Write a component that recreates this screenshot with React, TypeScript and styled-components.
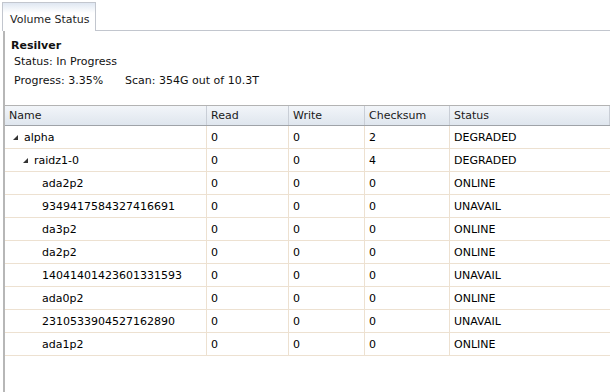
import styled, { createGlobalStyle } from 'styled-components';

// Volume status tab: resilver summary on top, pool tree grid below.

const Global = createGlobalStyle`
  html, body {
    margin: 0;
    padding: 0;
    background: #fff;
  }
  body {
    font-family: 'DejaVu Sans', Verdana, sans-serif;
    font-size: 11px;
    color: #000;
  }
`;

type Node = {
  name: string;
  depth: number;
  branch?: boolean;
  read: number;
  write: number;
  cksum: number;
  status: string;
};

const rows: Node[] = [
  { name: 'alpha', depth: 0, branch: true, read: 0, write: 0, cksum: 2, status: 'DEGRADED' },
  { name: 'raidz1-0', depth: 1, branch: true, read: 0, write: 0, cksum: 4, status: 'DEGRADED' },
  { name: 'ada2p2', depth: 2, read: 0, write: 0, cksum: 0, status: 'ONLINE' },
  { name: '9349417584327416691', depth: 2, read: 0, write: 0, cksum: 0, status: 'UNAVAIL' },
  { name: 'da3p2', depth: 2, read: 0, write: 0, cksum: 0, status: 'ONLINE' },
  { name: 'da2p2', depth: 2, read: 0, write: 0, cksum: 0, status: 'ONLINE' },
  { name: '14041401423601331593', depth: 2, read: 0, write: 0, cksum: 0, status: 'UNAVAIL' },
  { name: 'ada0p2', depth: 2, read: 0, write: 0, cksum: 0, status: 'ONLINE' },
  { name: '2310533904527162890', depth: 2, read: 0, write: 0, cksum: 0, status: 'UNAVAIL' },
  { name: 'ada1p2', depth: 2, read: 0, write: 0, cksum: 0, status: 'ONLINE' },
];

function Expander() {
  return (
    <svg width="5" height="5" viewBox="0 0 5 5">
      <polygon points="5,0 5,5 0,5" fill="#333" />
    </svg>
  );
}

export default function App() {
  return (
    <Page>
      <Global />
      <TabStrip>
        <Tab>Volume Status</Tab>
      </TabStrip>
      <Panel>
        <Summary>
          <Heading>Resilver</Heading>
          <Line $gap={2}>Status: In Progress</Line>
          <Line $gap={5}>
            <span>Progress: 3.35%</span>
            <span>Scan: 354G out of 10.3T</span>
          </Line>
        </Summary>
        <Grid>
          <HeaderRow>
            <HeadCell>Name</HeadCell>
            <HeadCell>Read</HeadCell>
            <HeadCell>Write</HeadCell>
            <HeadCell>Checksum</HeadCell>
            <HeadCell>Status</HeadCell>
          </HeaderRow>
          {rows.map((r) => (
            <Row key={r.name}>
              <NameCell $depth={r.depth} $branch={!!r.branch}>
                {r.branch && <Expander />}
                <span>{r.name}</span>
              </NameCell>
              <Cell>{r.read}</Cell>
              <Cell>{r.write}</Cell>
              <Cell>{r.cksum}</Cell>
              <Cell>{r.status}</Cell>
            </Row>
          ))}
        </Grid>
      </Panel>
    </Page>
  );
}

const Page = styled('div')`
  padding: 2px 0 0 2px;
  height: 392px;
  box-sizing: border-box;
  display: flex;
  flex-direction: column;
  overflow: hidden;
`;

const TabStrip = styled('div')`
  display: flex;
  height: 28px;
  border-bottom: 1px solid #c2c6ce;
`;

const Tab = styled('div')`
  width: 94px;
  box-sizing: border-box;
  padding: 10px 0 0 7px;
  margin-bottom: -1px;
  border: 1px solid #c2c6ce;
  border-bottom: none;
  background: linear-gradient(#dfe7f2 0px, #ffffff 10px, #ffffff);
  color: #1e1e1e;
  white-space: nowrap;
`;

const Panel = styled('div')`
  flex: 1;
  margin-left: 1px;
  border-left: 2px solid #b7b7b7;
  display: flex;
  flex-direction: column;
`;

const Summary = styled('div')`
  padding: 8px 0 0 6px;
  height: 74px;
  box-sizing: border-box;
`;

const Heading = styled('div')`
  font-weight: bold;
  color: #111;
  line-height: 14px;
`;

const Line = styled('div')<{ $gap?: number }>`
  display: flex;
  gap: 22px;
  padding-left: 3px;
  margin-top: ${(p) => p.$gap ?? 1}px;
  line-height: 14px;
  color: #111;
`;

const cols = '202px 82px 76px 85px 1fr';

const Grid = styled('div')`
  display: flex;
  flex-direction: column;
`;

const HeaderRow = styled('div')`
  display: grid;
  grid-template-columns: ${cols};
  height: 21px;
  box-sizing: border-box;
  border-top: 1px solid #b3b3b3;
  border-bottom: 1px solid #9fa3a8;
  background: linear-gradient(#f2f5f9, #dfe6ee);
`;

const HeadCell = styled('div')`
  display: flex;
  align-items: center;
  padding-left: 4px;
  border-right: 1px solid #c9ced6;
  color: #1a1a1a;
`;

const Row = styled('div')`
  display: grid;
  grid-template-columns: ${cols};
  height: 23px;
  box-sizing: border-box;
  border-bottom: 1px solid #ede1d1;
`;

const Cell = styled('div')`
  display: flex;
  align-items: center;
  padding-left: 4px;
  border-right: 1px solid #ede1d1;
  color: #000;
  &:last-child {
    border-right: none;
  }
`;

const NameCell = styled(Cell)<{ $depth: number; $branch: boolean }>`
  gap: 6px;
  padding-left: ${(p) => (p.$branch ? 8 + p.$depth * 10 : 37)}px;
  svg {
    margin-top: 1px;
  }
`;
